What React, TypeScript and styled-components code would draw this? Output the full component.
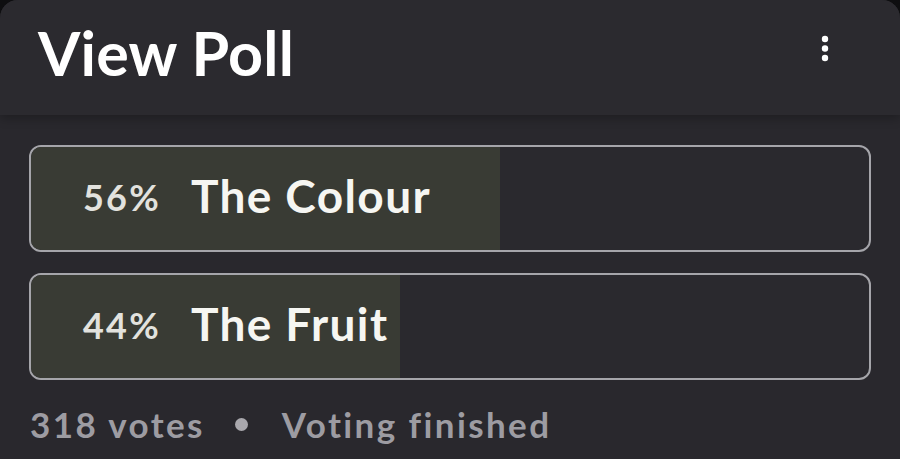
import React from "react";
import styled, { createGlobalStyle } from "styled-components";

const Global = createGlobalStyle`
  html, body { margin: 0; padding: 0; background: #0e0e10; }
  body { font-family: "Lato", "Noto Sans", sans-serif; }
`;

const Screen = styled.div`
  width: 900px;
  height: 459px;
  background: #29282d;
  border-top-left-radius: 18px;
  border-top-right-radius: 18px;
  overflow: hidden;
  display: flex;
  flex-direction: column;
`;

const Header = styled.header`
  height: 115px;
  flex: none;
  background: #2b2a2f;
  box-shadow: 0 3px 10px rgba(0, 0, 0, 0.28);
  display: flex;
  align-items: center;
  justify-content: space-between;
  padding: 0 70px 0 38px;
  position: relative;
  z-index: 1;
  box-sizing: border-box;
`;

const Title = styled.h1`
  margin: 0;
  margin-top: -10px;
  font-family: "Lato", sans-serif;
  font-weight: 700;
  font-size: 61px;
  letter-spacing: 0.2px;
  color: #ffffff;
`;

const MenuButton = styled.button`
  background: none;
  border: none;
  padding: 0;
  margin-top: -18px;
  display: flex;
  color: #ffffff;
`;

const Body = styled.main`
  padding: 30px 29px 0 29px;
  display: flex;
  flex-direction: column;
  gap: 21px;
`;

const Option = styled.div`
  position: relative;
  height: 107px;
  box-sizing: border-box;
  border: 2.5px solid #a5a5aa;
  border-radius: 12px;
  overflow: hidden;
  background: #2a292e;
  display: flex;
  align-items: center;
  padding-left: 52px;
`;

const Fill = styled.div`
  position: absolute;
  left: 0;
  top: 0;
  bottom: 0;
  background: #393b34;
`;

const Percent = styled.span`
  position: relative;
  flex: none;
  font-family: "Lato", sans-serif;
  font-weight: 700;
  font-size: 36px;
  letter-spacing: 2.2px;
  color: #e2e2de;
  margin-top: -4px;
`;

const Label = styled.span`
  position: relative;
  margin-left: 30px;
  font-family: "Lato", sans-serif;
  font-weight: 700;
  font-size: 46px;
  color: #f6f6f2;
  margin-top: -6px;
  letter-spacing: 1.4px;
`;

const Footer = styled.footer`
  display: flex;
  align-items: center;
  padding: 23px 0 0 30px;
  font-family: "Lato", sans-serif;
  font-weight: 700;
  font-size: 35px;
  color: #9d9ca2;
  letter-spacing: 2.4px;
`;

const Dot = styled.span`
  width: 13px;
  height: 13px;
  border-radius: 50%;
  background: #a9a8ad;
  margin: 0 34px 0 30px;
`;

const options = [
  { pct: 56, label: "The Colour" },
  { pct: 44, label: "The Fruit" },
];

export default function App() {
  return (
    <>
      <Global />
      <Screen>
        <Header>
          <Title>View Poll</Title>
          <MenuButton aria-label="More">
            <svg width="10" height="30" viewBox="0 0 10 30">
              <circle cx="5" cy="5" r="3.2" fill="#fff" />
              <circle cx="5" cy="14.5" r="3.2" fill="#fff" />
              <circle cx="5" cy="24" r="3.2" fill="#fff" />
            </svg>
          </MenuButton>
        </Header>
        <Body>
          {options.map((o) => (
            <Option key={o.label}>
              <Fill style={{ width: `${o.pct}%` }} />
              <Percent>{o.pct}%</Percent>
              <Label>{o.label}</Label>
            </Option>
          ))}
        </Body>
        <Footer>
          <span>318 votes</span>
          <Dot />
          <span>Voting finished</span>
        </Footer>
      </Screen>
    </>
  );
}
